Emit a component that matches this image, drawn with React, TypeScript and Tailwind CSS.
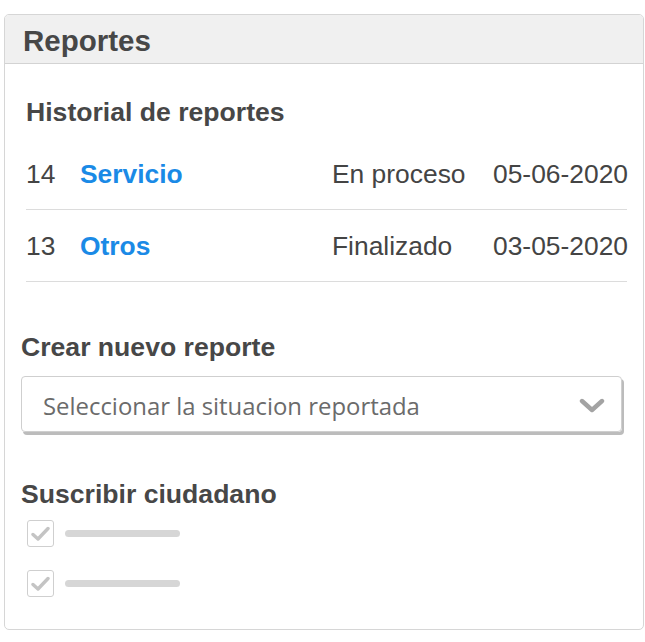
import React from "react";

const rows = [
  { id: "14", name: "Servicio", status: "En proceso", date: "05-06-2020" },
  { id: "13", name: "Otros", status: "Finalizado", date: "03-05-2020" },
];

function Check() {
  return (
    <div className="w-[27px] h-[27px] border border-[#cfcfcf] rounded-[3px] bg-white flex items-center justify-center">
      <svg width="19" height="16" viewBox="0 0 19 16">
        <path d="M2 8.5 L7 13 L17 2.5" fill="none" stroke="#c4c4c4" strokeWidth="3.4" strokeLinecap="round" strokeLinejoin="round" />
      </svg>
    </div>
  );
}

export default function App() {
  return (
    <div className="w-[645px] h-[642px] bg-white pt-[14px] pl-[4px]" style={{ fontFamily: '"Liberation Sans", Arial, sans-serif' }}>
      <div className="w-[640px] h-[616px] border border-[#d6d6d6] rounded-[5px] overflow-hidden flex flex-col">
        <div className="h-[49px] bg-[#f0f0f0] border-b border-[#d3d3d3] flex items-center pl-[18px] pt-[3px]">
          <span className="text-[29.5px] font-bold text-[#474747] leading-none">Reportes</span>
        </div>
        <div className="px-[16px] flex flex-col">
          <div className="pl-[5px] pt-[33px]">
            <div className="text-[26.6px] font-bold text-[#474747] leading-[30px]">Historial de reportes</div>
            <div className="mt-[11px]">
              {rows.map((r) => (
                <div key={r.id} className="h-[72px] border-b border-[#dcdcdc] flex items-center text-[26.4px] leading-[30px] text-[#444] whitespace-nowrap pt-[1px]">
                  <span className="w-[54px] shrink-0">{r.id}</span>
                  <span className="w-[252px] shrink-0 font-bold text-[#1a8ae6]">{r.name}</span>
                  <span className="w-[161px] shrink-0">{r.status}</span>
                  <span>{r.date}</span>
                </div>
              ))}
            </div>
          </div>
          <div className="mt-[50px] text-[26.6px] font-bold text-[#474747] leading-[30px]">Crear nuevo reporte</div>
          <div className="mt-[14px] w-[601px] h-[56px] border border-[#cfcfcf] rounded-[4px] shadow-[2px_3px_0_#bcbcbc] flex items-center justify-between pl-[21px] pr-[16px] pt-[3px]">
            <span className="text-[23.9px] text-[#6b6b6b] whitespace-nowrap" style={{ fontFamily: '"Open Sans", sans-serif' }}>Seleccionar la situacion reportada</span>
            <svg width="26" height="16" viewBox="0 0 26 16">
              <path d="M3 3 L13 12 L23 3" fill="none" stroke="#a3a3a3" strokeWidth="4.4" strokeLinecap="round" strokeLinejoin="round" />
            </svg>
          </div>
          <div className="mt-[47px] text-[26.6px] font-bold text-[#474747] leading-[30px]">Suscribir ciudadano</div>
          <div className="mt-[11px] pl-[6px] flex flex-col gap-[23px]">
            {[0, 1].map((i) => (
              <div key={i} className="flex items-center gap-[11px]">
                <Check />
                <div className="w-[115px] h-[7px] rounded-full bg-[#d6d6d6]" />
              </div>
            ))}
          </div>
        </div>
      </div>
    </div>
  );
}
